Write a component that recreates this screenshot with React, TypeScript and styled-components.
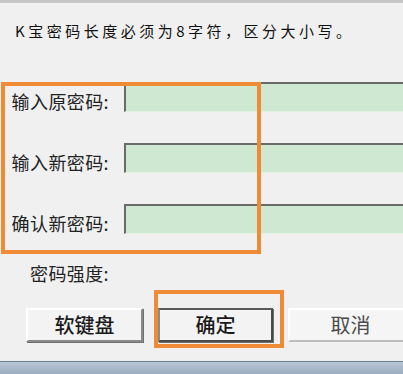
import styled, { createGlobalStyle } from "styled-components";

const GlobalStyle = createGlobalStyle`
  html, body {
    margin: 0;
    padding: 0;
    background: #f0f0f0;
  }
  body {
    font-family: "Noto Sans CJK SC", "Noto Sans", sans-serif;
  }
`;

const App: React.FunctionComponent = () => {
  return (
    <>
      <GlobalStyle />
      <DialogWindow>
        <TopStrip />
        <Notice>K宝密码长度必须为8字符，区分大小写。</Notice>
        <PasswordForm>
          <FieldRow>
            <FieldLabel>输入原密码:</FieldLabel>
            <PasswordInput type="password" readOnly />
          </FieldRow>
          <FieldRow>
            <FieldLabel>输入新密码:</FieldLabel>
            <PasswordInput type="password" readOnly />
          </FieldRow>
          <FieldRow>
            <FieldLabel>确认新密码:</FieldLabel>
            <PasswordInput type="password" readOnly />
          </FieldRow>
          <Highlight $top={0} $left={1} $width={260} $height={172} />
        </PasswordForm>
        <StrengthRow>
          <FieldLabel>密码强度:</FieldLabel>
        </StrengthRow>
        <ButtonRow>
          <DialogButton $width={117}>软键盘</DialogButton>
          <HighlightWrap>
            <DialogButton $width={115} $default>
              确定
            </DialogButton>
            <Highlight $top={-18} $left={-4} $width={130} $height={58} />
          </HighlightWrap>
          <DialogButton $width={125} $muted>
            取消
          </DialogButton>
        </ButtonRow>
        <TaskStrip />
      </DialogWindow>
    </>
  );
};

const DialogWindow = styled.div`
  width: 403px;
  height: 374px;
  overflow: hidden;
  display: flex;
  flex-direction: column;
  background: #f0f0f0;
  color: #1c1c1c;
`;

const TopStrip = styled.div`
  height: 3px;
  background: #c6c6c6;
`;

const Notice = styled.div`
  height: 79px;
  box-sizing: border-box;
  padding: 18px 0 0 15px;
  font-size: 15px;
  line-height: 20px;
  letter-spacing: 3.5px;
  white-space: nowrap;
  color: #111;
`;

const PasswordForm = styled.div`
  position: relative;
  display: flex;
  flex-direction: column;
  gap: 31px;
  padding-bottom: 20px;
`;

const FieldRow = styled.div`
  display: flex;
  align-items: flex-end;
  height: 30px;
`;

const FieldLabel = styled.div`
  width: 124px;
  flex: none;
  box-sizing: border-box;
  padding-right: 15px;
  text-align: right;
  font-size: 18px;
  line-height: 22px;
  letter-spacing: 0.4px;
  white-space: nowrap;
  color: #222;
`;

const PasswordInput = styled.input`
  flex: 1;
  min-width: 0;
  height: 30px;
  box-sizing: border-box;
  margin: 0;
  padding: 0 6px;
  background: #cfe8d2;
  border: none;
  border-top: 2px solid #6a6a6a;
  border-left: 2px solid #6a6a6a;
  border-bottom: 1px solid #e2efe3;
  outline: none;
`;

const Highlight = styled.div<{
  $top: number;
  $left: number;
  $width: number;
  $height: number;
}>`
  position: absolute;
  top: ${(p) => p.$top}px;
  left: ${(p) => p.$left}px;
  width: ${(p) => p.$width}px;
  height: ${(p) => p.$height}px;
  box-sizing: border-box;
  border: 4px solid #ef8a35;
  pointer-events: none;
`;

const StrengthRow = styled.div`
  display: flex;
  margin-top: 8px;
`;

const ButtonRow = styled.div`
  display: flex;
  gap: 15px;
  margin-top: 24px;
  padding-left: 26px;
`;

const HighlightWrap = styled.div`
  position: relative;
  flex: none;
`;

const DialogButton = styled.button<{
  $width: number;
  $default?: boolean;
  $muted?: boolean;
}>`
  flex: none;
  width: ${(p) => p.$width}px;
  height: 34px;
  box-sizing: border-box;
  margin: 0;
  padding: 0;
  font-family: "Noto Sans CJK SC", "Noto Sans", sans-serif;
  font-size: 20px;
  font-weight: ${(p) => (p.$muted ? 400 : 500)};
  line-height: 1;
  color: ${(p) => (p.$muted ? "#4a4a4a" : "#1a1a1a")};
  background: ${(p) => (p.$muted ? "#f5f5f5" : "#f3f3f3")};
  border: 2px solid;
  border-color: ${(p) =>
    p.$default
      ? "#5a5a5a #4a4a4a #4a4a4a #8a8a8a"
      : p.$muted
      ? "#ffffff #c4c4c4 #bdbdbd #ffffff"
      : "#ffffff #8a8a8a #8a8a8a #ffffff"};
  box-shadow: ${(p) => (p.$muted ? "none" : "1px 1px 0 #6e6e6e")};
`;

const TaskStrip = styled.div`
  margin-top: auto;
  height: 12px;
  border-top: 1px solid #6f7f92;
  background: linear-gradient(#b8c5d4, #9cadc1);
`;

export default App;
